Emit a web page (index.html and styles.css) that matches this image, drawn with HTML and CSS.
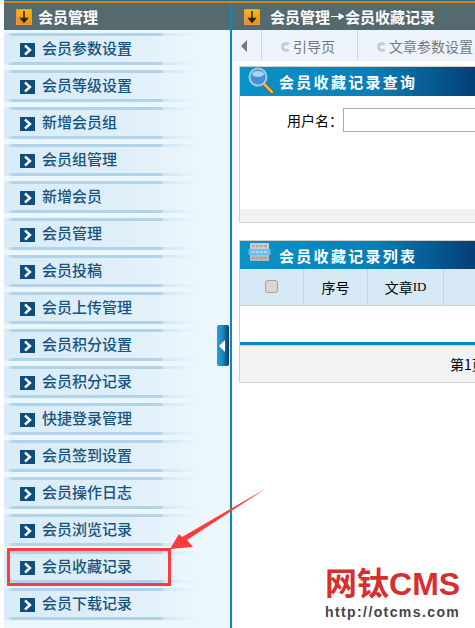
FILE: index.html
```html
<!DOCTYPE html>
<html>
<head>
	<meta charset="utf-8">
	<meta name="viewport" content="width=device-width,initial-scale=1.0">
	<title>会员收藏记录</title>

	<link rel="stylesheet" href="styles.css">

</head>
<body>

	<!-- TOP STRIP -->
	<figure class="top-strip"></figure>

	<section class="frame">

		<!-- LEFT MENU -->
		<section class="side">
			<section class="side-head">
				<figure class="down-icon"><svg width="14" height="14" viewBox="0 0 14 14"><path d="M7 1v8M4 8.500l3 3.500 3-3.500z" stroke="#222" stroke-width="1.600" fill="#222"/></svg></figure>
				<span>会员管理</span>
			</section>
			<nav class="menu">
				<a class="menu-item"><i class="chev"><svg width="14" height="12" viewBox="0 0 14 12"><path d="M4 1.5l5 4.5-5 4.500" stroke="#fff" stroke-width="2.400" fill="none"/></svg></i>会员参数设置</a>
				<a class="menu-item"><i class="chev"><svg width="14" height="12" viewBox="0 0 14 12"><path d="M4 1.5l5 4.5-5 4.500" stroke="#fff" stroke-width="2.400" fill="none"/></svg></i>会员等级设置</a>
				<a class="menu-item"><i class="chev"><svg width="14" height="12" viewBox="0 0 14 12"><path d="M4 1.5l5 4.5-5 4.500" stroke="#fff" stroke-width="2.400" fill="none"/></svg></i>新增会员组</a>
				<a class="menu-item"><i class="chev"><svg width="14" height="12" viewBox="0 0 14 12"><path d="M4 1.5l5 4.5-5 4.500" stroke="#fff" stroke-width="2.400" fill="none"/></svg></i>会员组管理</a>
				<a class="menu-item"><i class="chev"><svg width="14" height="12" viewBox="0 0 14 12"><path d="M4 1.5l5 4.5-5 4.500" stroke="#fff" stroke-width="2.400" fill="none"/></svg></i>新增会员</a>
				<a class="menu-item"><i class="chev"><svg width="14" height="12" viewBox="0 0 14 12"><path d="M4 1.5l5 4.5-5 4.500" stroke="#fff" stroke-width="2.400" fill="none"/></svg></i>会员管理</a>
				<a class="menu-item"><i class="chev"><svg width="14" height="12" viewBox="0 0 14 12"><path d="M4 1.5l5 4.5-5 4.500" stroke="#fff" stroke-width="2.400" fill="none"/></svg></i>会员投稿</a>
				<a class="menu-item"><i class="chev"><svg width="14" height="12" viewBox="0 0 14 12"><path d="M4 1.5l5 4.5-5 4.500" stroke="#fff" stroke-width="2.400" fill="none"/></svg></i>会员上传管理</a>
				<a class="menu-item"><i class="chev"><svg width="14" height="12" viewBox="0 0 14 12"><path d="M4 1.5l5 4.5-5 4.500" stroke="#fff" stroke-width="2.400" fill="none"/></svg></i>会员积分设置</a>
				<a class="menu-item"><i class="chev"><svg width="14" height="12" viewBox="0 0 14 12"><path d="M4 1.5l5 4.5-5 4.500" stroke="#fff" stroke-width="2.400" fill="none"/></svg></i>会员积分记录</a>
				<a class="menu-item"><i class="chev"><svg width="14" height="12" viewBox="0 0 14 12"><path d="M4 1.5l5 4.5-5 4.500" stroke="#fff" stroke-width="2.400" fill="none"/></svg></i>快捷登录管理</a>
				<a class="menu-item"><i class="chev"><svg width="14" height="12" viewBox="0 0 14 12"><path d="M4 1.5l5 4.5-5 4.500" stroke="#fff" stroke-width="2.400" fill="none"/></svg></i>会员签到设置</a>
				<a class="menu-item"><i class="chev"><svg width="14" height="12" viewBox="0 0 14 12"><path d="M4 1.5l5 4.5-5 4.500" stroke="#fff" stroke-width="2.400" fill="none"/></svg></i>会员操作日志</a>
				<a class="menu-item"><i class="chev"><svg width="14" height="12" viewBox="0 0 14 12"><path d="M4 1.5l5 4.5-5 4.500" stroke="#fff" stroke-width="2.400" fill="none"/></svg></i>会员浏览记录</a>
				<a class="menu-item"><i class="chev"><svg width="14" height="12" viewBox="0 0 14 12"><path d="M4 1.5l5 4.5-5 4.500" stroke="#fff" stroke-width="2.400" fill="none"/></svg></i>会员收藏记录</a>
				<a class="menu-item"><i class="chev"><svg width="14" height="12" viewBox="0 0 14 12"><path d="M4 1.5l5 4.5-5 4.500" stroke="#fff" stroke-width="2.400" fill="none"/></svg></i>会员下载记录</a>
			</nav>
		</section>

		<!-- MAIN AREA -->
		<section class="main">
			<section class="main-head">
				<figure class="down-icon"><svg width="14" height="14" viewBox="0 0 14 14"><path d="M7 1v8M4 8.500l3 3.500 3-3.500z" stroke="#222" stroke-width="1.600" fill="#222"/></svg></figure>
				<span>会员管理</span><svg class="crumb-arrow" width="15" height="7" viewBox="0 0 15 7"><path d="M1 3.500h9M9 0.500l5 3-5 3z" stroke="#fff" fill="#fff"/></svg><span>会员收藏记录</span>
			</section>

			<section class="tabs">
				<section class="tab-prev"><figure class="tab-tri"></figure></section>
				<section class="tab"><figure class="tab-c"></figure>引导页</section>
				<section class="tab"><figure class="tab-c"></figure>文章参数设置</section>
			</section>

			<!-- QUERY PANEL -->
			<section class="panel">
				<section class="panel-head">
					<svg class="panel-icon" width="28" height="28" viewBox="0 0 28 28">
						<path d="M17 17l8 8" stroke="#7a5a20" stroke-width="4.500" stroke-linecap="round"/>
						<path d="M17 17l8 8" stroke="#f4b840" stroke-width="2.500" stroke-linecap="round"/>
						<circle cx="11" cy="10" r="8.500" fill="#3f93d4" stroke="#a8c8dc" stroke-width="2"/>
						<ellipse cx="11" cy="7" rx="6" ry="3" fill="#a6d4f2"/>
					</svg>
					<span>会员收藏记录查询</span>
				</section>
				<section class="query-body">
					<label class="query-label">用户名：</label>
					<input class="query-input" type="text">
				</section>
				<section class="panel-foot"></section>
			</section>

			<!-- LIST PANEL -->
			<section class="panel list-panel">
				<section class="panel-head">
					<svg class="panel-icon" width="24" height="20" viewBox="0 0 24 20">
						<rect x="2" y="1" width="19" height="6" fill="#c6cdd0"/>
						<rect x="2" y="13" width="19" height="6" fill="#b4bcbf"/>
						<path d="M4 4h15M4 16h15" stroke="#8a9296" stroke-dasharray="3 1"/>
						<rect x="0.500" y="7" width="22" height="6" rx="1" fill="#6fbdf0"/>
						<path d="M4 10h15" stroke="#e4f4ff" stroke-dasharray="3 1"/>
					</svg>
					<span>会员收藏记录列表</span>
				</section>
				<section class="list-cols">
					<section class="col col-check"><figure class="fake-check"></figure></section>
					<section class="col col-no">序号</section>
					<section class="col col-id">文章<span class="col-latin">ID</span></section>
					<section class="col col-rest"></section>
				</section>
				<section class="list-empty"></section>
				<section class="list-foot">第1页</section>
			</section>
		</section>

		<!-- COLLAPSE HANDLE -->
		<figure class="side-toggle"><figure class="side-tri"></figure></figure>
	</section>

	<!-- ANNOTATION OVER THE SCREENSHOT -->
	<figure class="mark-box"></figure>
	<svg class="mark-arrow" width="100" height="66" viewBox="0 0 100 66">
		<path d="M97 3L14 51 11 48 2 63 25 61 19 54z" fill="#ff3b3b"/>
	</svg>

	<section class="stamp">
		<div class="stamp-title"><span class="stamp-cn">网钛</span>CMS</div>
		<div class="stamp-url">http://otcms.com</div>
	</section>

</body>
</html>
```

FILE: styles.css
```css
html, body {
	padding:0;
	margin:0;
	height:100%;
	overflow:hidden;
	background:#fff;
}

div, figure, section, nav, input {
	padding:0; margin:0; box-sizing: border-box;
}

body {
	font-family:"Noto Sans CJK SC", "Liberation Sans", sans-serif;
	font-size:14px;
	color:#000;
	position:relative;
}

.top-strip {
	height:3px;
	background:linear-gradient(#1a6f9c 0, #1a6f9c 1px, #e87b0c 1px, #e87b0c 3px);
	margin-left:4px;
}

.frame {
	display:flex;
	height:625px;
	padding-left:4px;
}

/* left menu */
.side {
	width:228px;
	flex:none;
	background:#ecf6fd;
	border-right:2px solid #0a87bf;
}

.side-head, .main-head {
	height:27px;
	background:#546a6e;
	color:#fff;
	font-weight:bold;
	font-size:15px;
	display:flex;
	align-items:center;
}

.side-head { padding-left:12px; }
.side-head .down-icon { margin-right:6px; }

.main-head { padding-left:12px; }
.main-head .down-icon { margin-right:10px; }

.down-icon {
	width:16px;
	height:16px;
	flex:none;
	background:linear-gradient(#f9bc00, #f08a10);
	border:1px solid #e89a50;
	display:flex;
	align-items:center;
	justify-content:center;
}

.crumb-arrow { flex:none; }

.menu { display:block; }

.menu-item {
	display:flex;
	box-sizing:border-box;
	align-items:center;
	height:37px;
	padding:0 0 2px 16px;
	font-size:15px;
	font-weight:500;
	color:#17537f;
	background:
		linear-gradient(90deg, rgba(170,207,230,0) 3px, #b0d3e9 9px, #b0d3e9 157px, #d4e8f5 160px, rgba(212,232,245,0) 193px) 0 3px / 100% 3px no-repeat,
		linear-gradient(90deg, rgba(170,207,230,0) 3px, #b0d3e9 9px, #b0d3e9 157px, #d4e8f5 160px, rgba(212,232,245,0) 193px) 0 32px / 100% 3px no-repeat,
		linear-gradient(90deg, #d9ecf7 0, #dfeff9 120px, #ecf6fd 192px) 0 3px / 100% 32px no-repeat;
}

.chev {
	width:15px;
	height:14px;
	flex:none;
	background:#0f4d7d;
	margin:5px 7px 0 0;
	display:flex;
	align-items:center;
	justify-content:center;
}

/* main area */
.main {
	flex:1;
	min-width:0;
	overflow:hidden;
}

.tabs {
	height:31px;
	background:#edf4fb;
	display:flex;
	align-items:stretch;
	color:#777;
	font-size:14px;
}

.tab-prev {
	width:30px;
	flex:none;
	border-right:1px solid #d4d4d4;
	display:flex;
	align-items:center;
	justify-content:center;
}

.tab-tri {
	border-right:6px solid #777;
	border-top:6px solid transparent;
	border-bottom:6px solid transparent;
	margin-right:6px;
}

.tab {
	flex:none;
	display:flex;
	align-items:center;
	padding:0 22px 0 19px;
	border-right:1px solid #d4d4d4;
	white-space:nowrap;
}

.tab-c {
	width:10px;
	height:10px;
	border:3px solid #ccc;
	border-right-color:transparent;
	border-radius:50%;
	margin:3px 2px 0 0;
}

.panel {
	width:300px;
	margin:5px 0 0 7px;
	border:1px solid #d0d0d0;
	background:#fff;
}

.panel-head {
	height:29px;
	background:linear-gradient(90deg, #0a93c9 0, #0a7fb5 45%, #002a60 90%);
	color:#fff;
	font-weight:bold;
	font-size:15px;
	letter-spacing:2.300px;
	display:flex;
	align-items:center;
	padding-left:39px;
	position:relative;
}

.panel-icon {
	position:absolute;
	left:7px;
	top:0;
}

.list-panel .panel-icon { left:8px; top:1px; }

.query-body {
	height:113px;
	padding:12px 0 0 47px;
	display:flex;
	align-items:flex-start;
}

.query-label { line-height:24px; white-space:nowrap; }

.query-input {
	width:200px;
	height:24px;
	border:1px solid #aaa;
	background:#fff;
}

.panel-foot {
	height:13px;
	background:#f2f2f2;
}

.list-panel { margin-top:17px; }

.list-panel .panel-head { height:28px; }

.list-cols {
	display:flex;
	height:37px;
	background:#d7e9f5;
	border-bottom:1px solid #d0d0d0;
	text-align:center;
}

.col {
	display:flex;
	align-items:center;
	justify-content:center;
	border-right:1px solid #d0d0d0;
}

.col-check { width:64px; }
.col-no { width:64px; }
.col-id { width:76px; }
.col-rest { flex:1; border-right:0; }

.col-latin {
	font-family:"Liberation Serif", serif;
	font-size:13px;
}

.fake-check {
	width:13px;
	height:13px;
	background:#d8d8d8;
	border:1px solid #a0a0a0;
	border-radius:3px;
	margin-bottom:2px;
}

.list-empty {
	height:36px;
	border-bottom:3px solid #0a87bf;
	box-sizing:content-box;
}

.list-foot {
	height:37px;
	background:#f2f2f2;
	border-top:1px solid #d0d0d0;
	line-height:36px;
	padding-left:210px;
	white-space:nowrap;
}

/* collapse handle */
.side-toggle {
	position:absolute;
	left:217px;
	top:325px;
	width:12px;
	height:41px;
	border-radius:2px;
	background:linear-gradient(90deg, #2a9fd8, #1a86c0 50%, #0a3a60);
	display:flex;
	align-items:center;
	padding-left:2px;
}

.side-tri {
	border-right:6px solid #fff;
	border-top:6px solid transparent;
	border-bottom:6px solid transparent;
}

/* annotation */
.mark-box {
	position:absolute;
	left:7px;
	top:548px;
	width:164px;
	height:38px;
	border:3px solid #ff3b3b;
}

.mark-arrow {
	position:absolute;
	left:168px;
	top:486px;
}

.stamp {
	position:absolute;
	left:325px;
	top:563px;
	width:140px;
}

.stamp-title {
	font-family:"Liberation Sans", sans-serif;
	font-weight:bold;
	font-size:32px;
	line-height:36px;
	color:#d62f2f;
	white-space:nowrap;
}

.stamp-cn {
	font-family:"Noto Sans CJK SC", sans-serif;
	font-weight:bold;
}

.stamp-url {
	font-family:"Liberation Sans", sans-serif;
	font-weight:bold;
	font-size:14px;
	line-height:18px;
	letter-spacing:1.400px;
	margin-top:1px;
	color:#444;
	white-space:nowrap;
}
```
